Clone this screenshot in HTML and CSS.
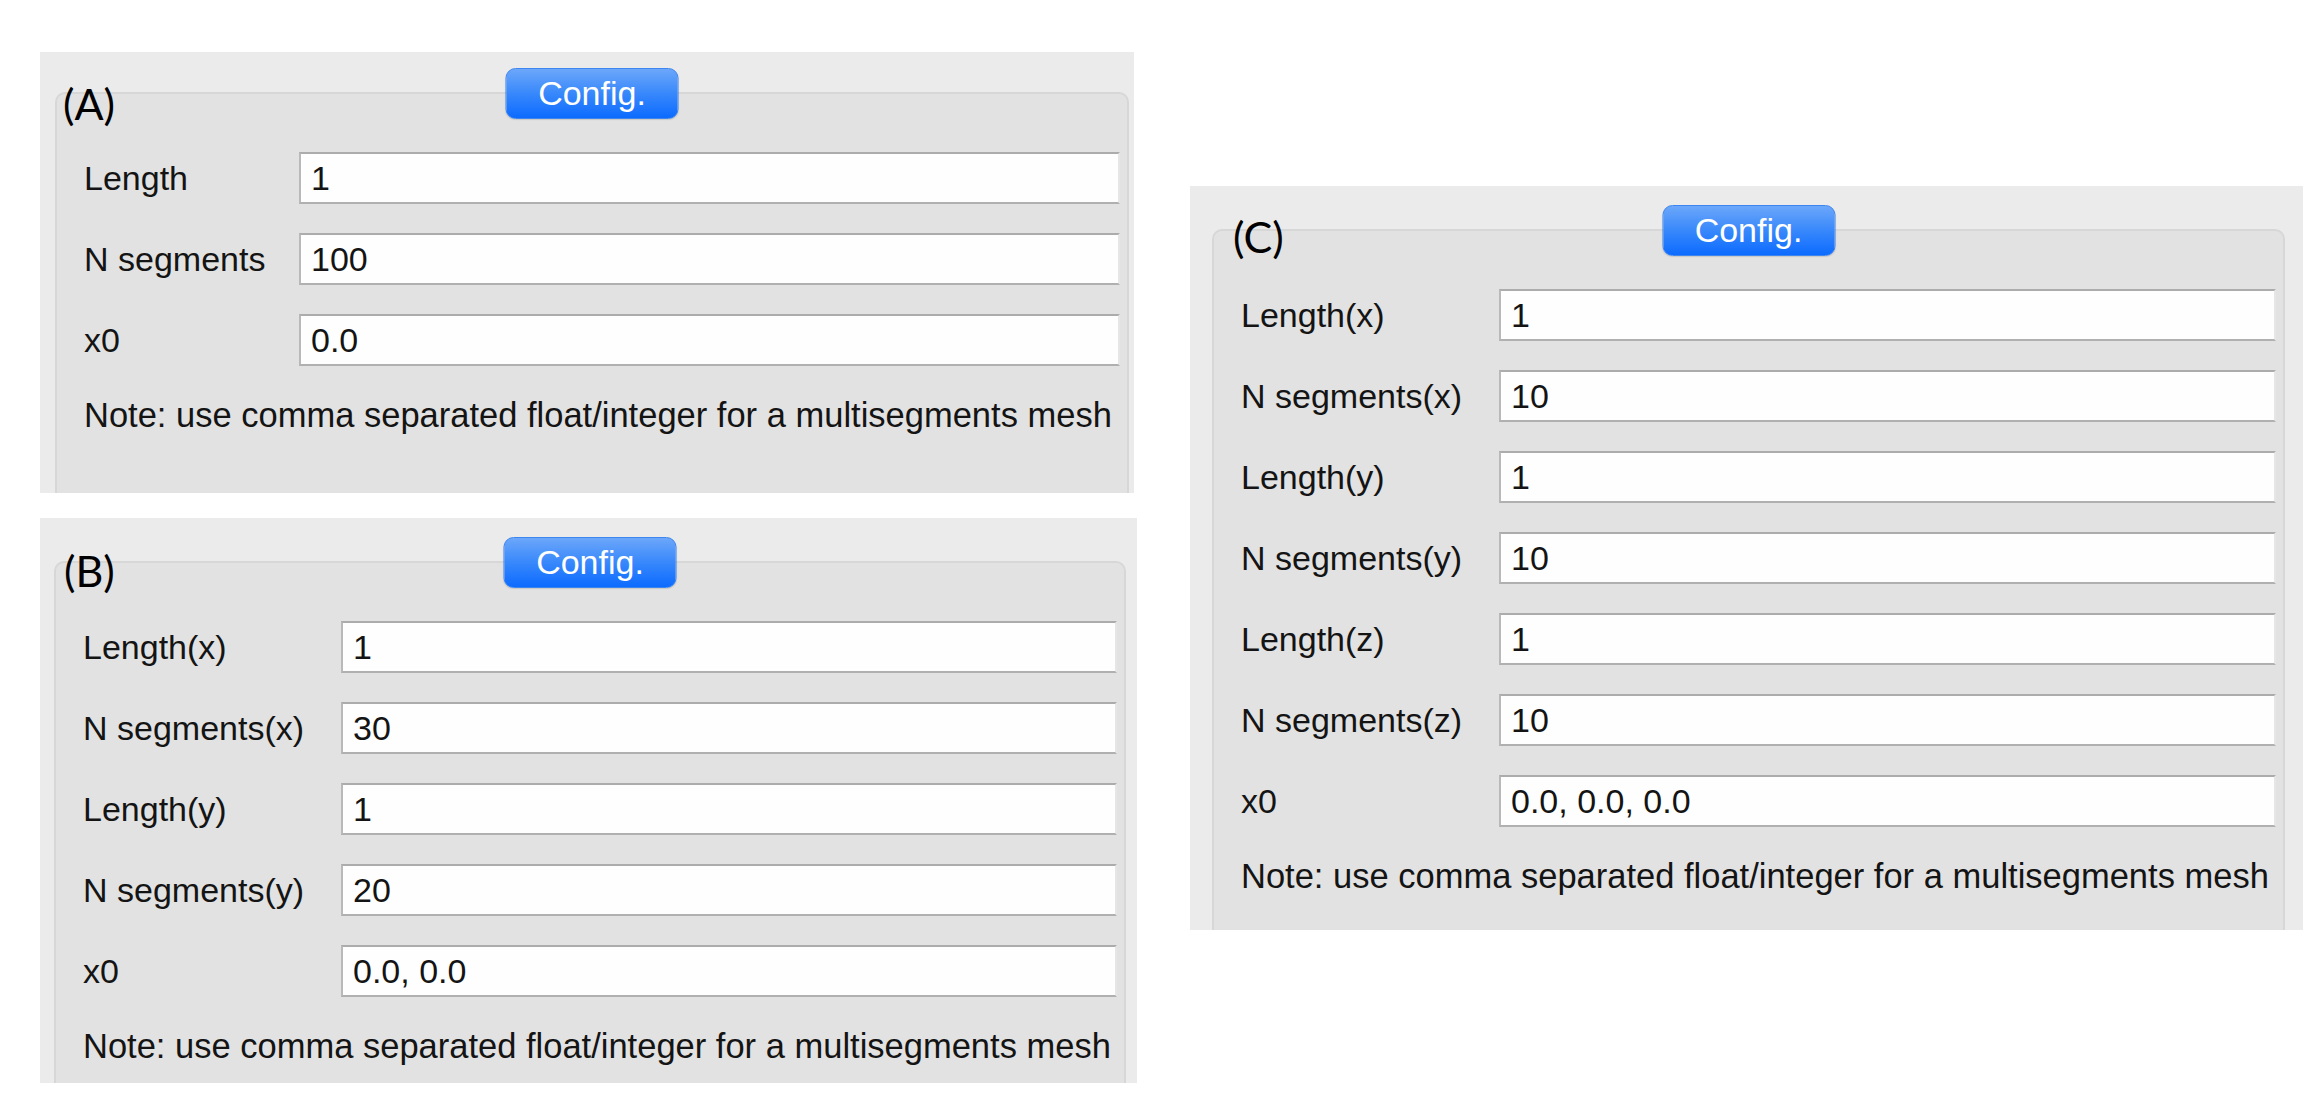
FILE: index.html
```html
<!DOCTYPE html>
<html lang="en">
<head>
<meta charset="utf-8">
<title>Mesh configuration</title>
<link rel="stylesheet" href="styles.css">
</head>
<body>
<div class="canvas">
  <div class="col-left">
    <section class="panel panel-a">
      <span class="tag tag-a">(A)</span>
      <div class="group">
        <button class="config">Config.</button>
        <div class="form form-a">
          <label>Length</label><input class="entry" value="1">
          <label>N segments</label><input class="entry" value="100">
          <label>x0</label><input class="entry" value="0.0">
        </div>
        <p class="note note-a">Note: use comma separated float/integer for a multisegments mesh</p>
      </div>
    </section>

    <section class="panel panel-b">
      <span class="tag tag-b">(B)</span>
      <div class="group">
        <button class="config">Config.</button>
        <div class="form form-wide">
          <label>Length(x)</label><input class="entry" value="1">
          <label>N segments(x)</label><input class="entry" value="30">
          <label>Length(y)</label><input class="entry" value="1">
          <label>N segments(y)</label><input class="entry" value="20">
          <label>x0</label><input class="entry" value="0.0, 0.0">
        </div>
        <p class="note">Note: use comma separated float/integer for a multisegments mesh</p>
      </div>
    </section>
  </div>

  <section class="panel panel-c">
    <span class="tag tag-c">(C)</span>
    <div class="group">
      <button class="config">Config.</button>
      <div class="form form-wide">
        <label>Length(x)</label><input class="entry" value="1">
        <label>N segments(x)</label><input class="entry" value="10">
        <label>Length(y)</label><input class="entry" value="1">
        <label>N segments(y)</label><input class="entry" value="10">
        <label>Length(z)</label><input class="entry" value="1">
        <label>N segments(z)</label><input class="entry" value="10">
        <label>x0</label><input class="entry" value="0.0, 0.0, 0.0">
      </div>
      <p class="note">Note: use comma separated float/integer for a multisegments mesh</p>
    </div>
  </section>
</div>
</body>
</html>
```

FILE: styles.css
```css
html, body {
  margin: 0;
  padding: 0;
  background: #ffffff;
}

body {
  font-family: "Liberation Sans", Arial, sans-serif;
  color: #141414;
}

.canvas {
  display: flex;
  align-items: flex-start;
  gap: 53px;
  padding: 52px 0 0 40px;
}

.col-left {
  display: flex;
  flex-direction: column;
  gap: 25px;
}

.panel {
  position: relative;
  display: flex;
  flex-direction: column;
  background: #ebebeb;
  box-sizing: border-box;
}

.panel-a {
  width: 1094px;
  height: 441px;
}

.panel-b {
  width: 1097px;
  height: 565px;
}

.panel-c {
  width: 1113px;
  height: 744px;
  margin-top: 134px;
}

.group {
  position: relative;
  flex: 1;
  margin: 40px 5px 0 15px;
  background: #e2e2e2;
  border: 2px solid #d7d7d7;
  border-bottom: none;
  border-radius: 10px 10px 0 0;
}

.panel-b .group {
  margin: 43px 11px 0 14px;
}

.panel-c .group {
  margin: 43px 18px 0 22px;
}

.config {
  position: absolute;
  top: -26px;
  left: 50%;
  transform: translateX(-50%);
  width: 173px;
  height: 51px;
  padding: 0;
  border: 1px solid #3d86f0;
  border-radius: 10px;
  background: linear-gradient(to bottom, #6ca7fa 0%, #3d8bfb 45%, #0c6bff 100%);
  color: #ffffff;
  font-family: "Liberation Sans", Arial, sans-serif;
  font-size: 34px;
  line-height: 49px;
  box-shadow: 0 1px 1px rgba(0, 0, 0, 0.12);
}

.form {
  display: grid;
  grid-template-columns: 215px 1fr;
  row-gap: 29px;
  align-items: center;
  padding: 58px 7px 0 27px;
}

.form-wide {
  grid-template-columns: 258px 1fr;
}

.form label {
  font-size: 34px;
  line-height: 40px;
  white-space: nowrap;
}

.entry {
  display: block;
  box-sizing: border-box;
  width: 100%;
  height: 52px;
  margin: 0;
  padding: 0 10px;
  background: #fefefe;
  border: 2px solid #b9b9b9;
  border-top-color: #acacac;
  border-bottom-color: #b0b0b0;
  border-right-color: #e6e6e6;
  border-radius: 0;
  outline: none;
  font-family: "Liberation Sans", Arial, sans-serif;
  font-size: 34px;
  color: #141414;
}

.note {
  margin: 29px 0 0 27px;
  font-size: 34.5px;
  line-height: 40px;
  white-space: nowrap;
}

.tag {
  position: absolute;
  z-index: 2;
  font-family: Lato, "Open Sans", sans-serif;
  font-size: 43px;
  line-height: 43px;
  color: #000000;
}

.tag-a {
  left: 23px;
  top: 30px;
}

.tag-b {
  left: 24px;
  top: 31px;
}

.tag-c {
  left: 43px;
  top: 29px;
}
```
